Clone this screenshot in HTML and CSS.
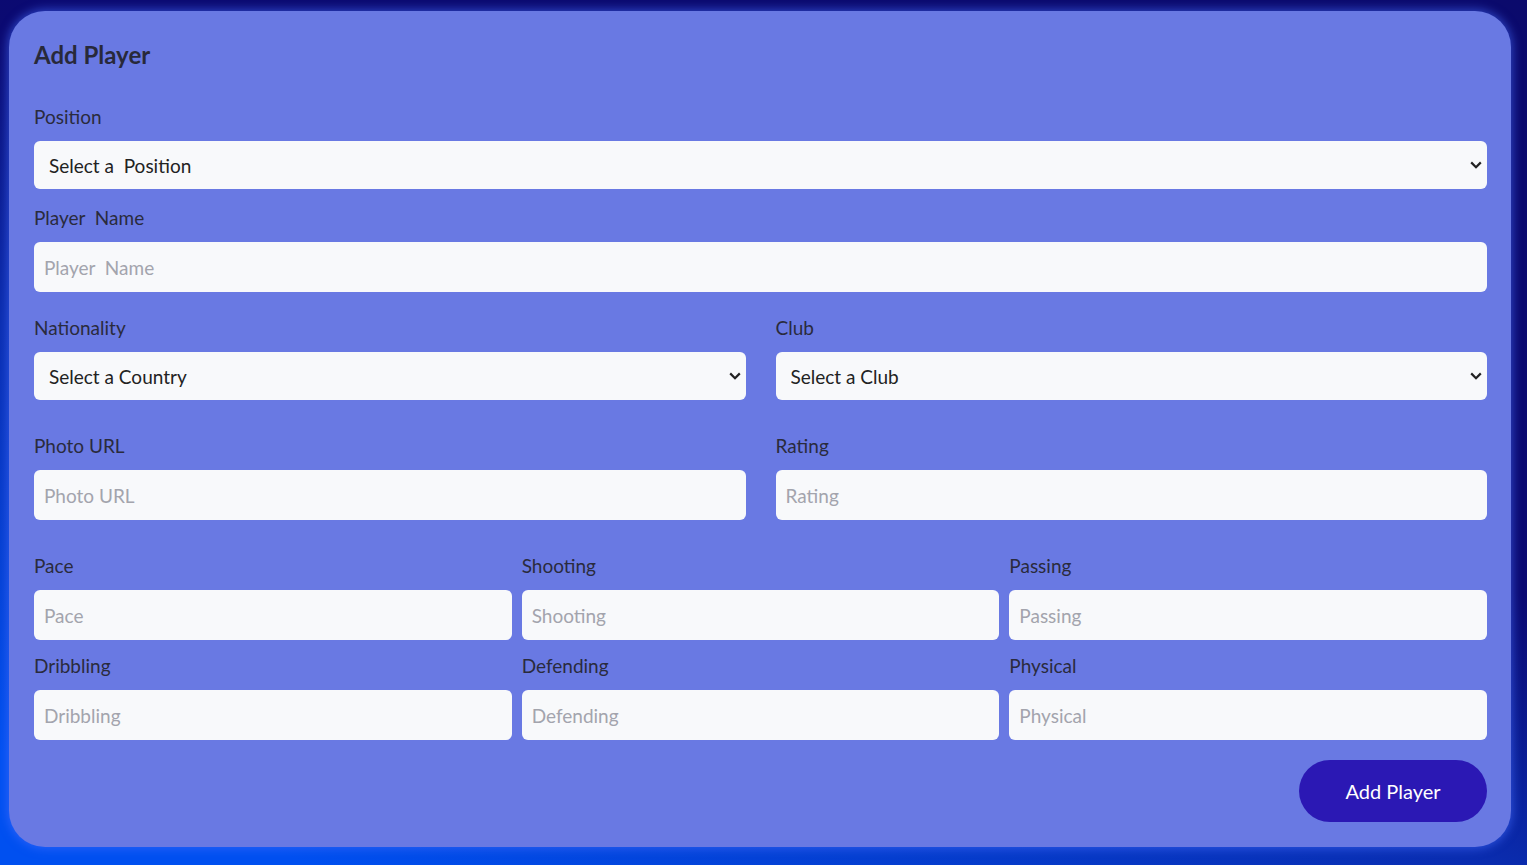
FILE: index.html
```html
<!DOCTYPE html>
<html lang="en">
<head>
<meta charset="utf-8">
<title>Add Player</title>
<link rel="stylesheet" href="styles.css">
</head>
<body>
<main class="card">
  <h2 class="title">Add Player</h2>
  <div class="field field-position">
    <label class="label">Position</label>
    <select class="control select"><option>Select a&nbsp; Position</option></select>
  </div>
  <div class="field field-name">
    <label class="label">Player&nbsp; Name</label>
    <input class="control input" type="text" placeholder="Player&nbsp; Name">
  </div>
  <div class="grid two row-a">
    <div class="field">
      <label class="label">Nationality</label>
      <select class="control select"><option>Select a Country</option></select>
    </div>
    <div class="field">
      <label class="label">Club</label>
      <select class="control select"><option>Select a Club</option></select>
    </div>
  </div>
  <div class="grid two row-b">
    <div class="field">
      <label class="label">Photo URL</label>
      <input class="control input" type="text" placeholder="Photo URL">
    </div>
    <div class="field">
      <label class="label">Rating</label>
      <input class="control input" type="text" placeholder="Rating">
    </div>
  </div>
  <div class="grid three row-c">
    <div class="field"><label class="label">Pace</label><input class="control input" type="text" placeholder="Pace"></div>
    <div class="field"><label class="label">Shooting</label><input class="control input" type="text" placeholder="Shooting"></div>
    <div class="field"><label class="label">Passing</label><input class="control input" type="text" placeholder="Passing"></div>
  </div>
  <div class="grid three row-d">
    <div class="field"><label class="label">Dribbling</label><input class="control input" type="text" placeholder="Dribbling"></div>
    <div class="field"><label class="label">Defending</label><input class="control input" type="text" placeholder="Defending"></div>
    <div class="field"><label class="label">Physical</label><input class="control input" type="text" placeholder="Physical"></div>
  </div>
  <div class="actions">
    <button class="btn" type="button">Add Player</button>
  </div>
</main>
</body>
</html>
```
FILE: styles.css
```css
* { box-sizing: border-box; }
html, body { height: 100%; }
body {
  margin: 0;
  padding: 11px 16px 18px 9px;
  background: linear-gradient(200deg, #0b0a6c 0%, #0b0a72 42%, #0a2db0 62%, #0050f0 92%);
  font-family: "Lato", "Liberation Sans", sans-serif;
  color: #2a2b3d;
}
.card {
  height: 836px;
  background: #6979e3;
  border-radius: 36px;
  padding: 29px 24px 25px 25px;
  box-shadow: 0 0 10px 2px rgba(70, 110, 255, 0.55);
  display: flex;
  flex-direction: column;
}
.title {
  margin: 0;
  font-size: 24px;
  line-height: 30px;
  font-weight: 700;
  color: #28293a;
}
.field {
  display: flex;
  flex-direction: column;
  gap: 12px;
  min-width: 0;
}
.label {
  font-size: 19px;
  line-height: 24px;
  color: #2a2b3d;
}
.control {
  width: 100%;
  border: none;
  border-radius: 6px;
  background-color: #f8f9fb;
  font-family: inherit;
  font-size: 19px;
  color: #222;
  outline: none;
}
.select {
  height: 48px;
  padding: 0 26px 0 15px;
  appearance: none;
  -webkit-appearance: none;
  background-image: url("data:image/svg+xml,%3Csvg xmlns='http://www.w3.org/2000/svg' width='12' height='8' viewBox='0 0 12 8'%3E%3Cpolyline points='1.2,1.4 6,6.2 10.8,1.4' fill='none' stroke='%23222' stroke-width='2.2'/%3E%3C/svg%3E");
  background-repeat: no-repeat;
  background-position: right 5px center;
  background-size: 12px 8px;
}
.input { height: 50px; padding: 0 10px; }
.input::placeholder { color: #a3a4ad; }
.field-position { margin-top: 35px; }
.field-name { margin-top: 17px; }
.grid { display: grid; }
.grid.two { grid-template-columns: 1fr 1fr; column-gap: 30px; }
.grid.three { grid-template-columns: 1fr 1fr 1fr; column-gap: 10px; }
.row-a { margin-top: 24px; }
.row-b { margin-top: 34px; }
.row-c { margin-top: 34px; }
.row-d { margin-top: 14px; }
.actions {
  margin-top: 20px;
  display: flex;
  justify-content: flex-end;
}
.btn {
  width: 188px;
  height: 62px;
  border: none;
  border-radius: 31px;
  background: #2b18b4;
  color: #fff;
  font-family: inherit;
  font-size: 20px;
}
```
